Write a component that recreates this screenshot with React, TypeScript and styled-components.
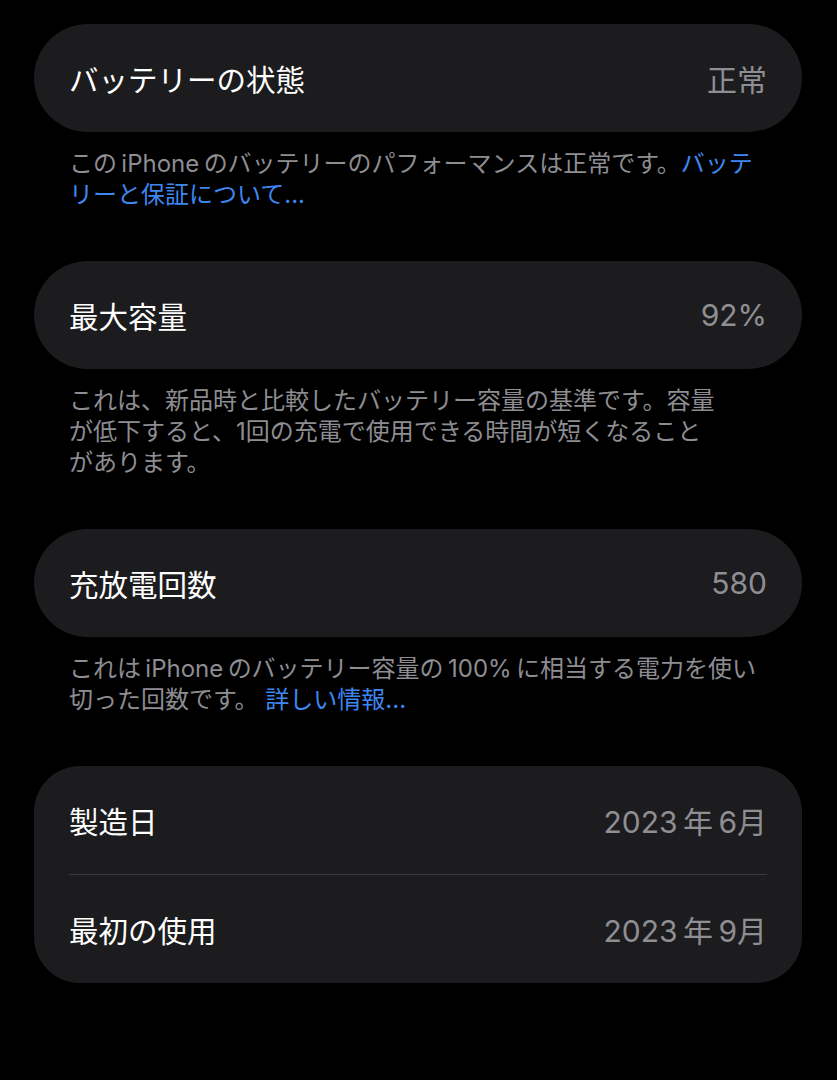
import React from 'react';
import styled, { createGlobalStyle } from 'styled-components';

const GlobalStyle = createGlobalStyle`
  html, body {
    margin: 0;
    padding: 0;
    background: #000;
  }
  body {
    font-family: "Inter", "Noto Sans CJK JP", sans-serif;
    -webkit-font-smoothing: antialiased;
  }
`;

const Page = styled.div`
  display: flex;
  flex-direction: column;
  padding: 24px 35px 40px 34px;
  min-height: 1080px;
  box-sizing: border-box;
  background: #000;
`;

const Section = styled.section`
  display: flex;
  flex-direction: column;
`;

const Card = styled.div<{ $radius: number }>`
  display: flex;
  flex-direction: column;
  background: #1c1c1e;
  border-radius: ${(p) => p.$radius}px;
  padding: 0 35px;
`;

const Row = styled.div`
  display: flex;
  align-items: center;
  justify-content: space-between;
  height: 108px;
`;

const Divider = styled.div`
  height: 1px;
  background: #3a3a3d;
`;

const Label = styled.span`
  font-family: "Noto Sans CJK JP", sans-serif;
  font-size: 29.5px;
  font-weight: 400;
  color: #fff;
`;

const Value = styled.span`
  font-family: "Inter", "Noto Sans CJK JP", sans-serif;
  font-size: 30px;
  font-weight: 400;
  color: #8e8e93;
`;

const Footer = styled.p`
  margin: 0;
  padding: 16px 35px 51px;
  font-family: "Inter", "Noto Sans CJK JP", sans-serif;
  font-size: 24px;
  line-height: 31px;
  color: #8d8d92;
`;

const Link = styled.a`
  color: #3e87f0;
  text-decoration: none;
`;

type Item = { label: string; value: string };

const Group: React.FC<{ items: Item[]; children?: React.ReactNode }> = ({ items, children }) => (
  <Section>
    <Card $radius={items.length > 1 ? 46 : 54}>
      {items.map((it, i) => (
        <React.Fragment key={it.label}>
          {i > 0 && <Divider />}
          <Row>
            <Label>{it.label}</Label>
            <Value>{it.value}</Value>
          </Row>
        </React.Fragment>
      ))}
    </Card>
    {children}
  </Section>
);

// thin space between latin words and kana, like the system text
const ts = '\u2009';

export default function App() {
  return (
    <>
      <GlobalStyle />
      <Page>
        <Group items={[{ label: 'バッテリーの状態', value: '正常' }]}>
          <Footer>
            この{ts}iPhone{ts}のバッテリーのパフォーマンスは正常です。<Link>バッテ<br />リーと保証について...</Link>
          </Footer>
        </Group>
        <Group items={[{ label: '最大容量', value: '92%' }]}>
          <Footer>
            これは、新品時と比較したバッテリー容量の基準です。容量<br />
            が低下すると、1回の充電で使用できる時間が短くなること<br />
            があります。
          </Footer>
        </Group>
        <Group items={[{ label: '充放電回数', value: '580' }]}>
          <Footer>
            これは{ts}iPhone{ts}のバッテリー容量の{ts}100%{ts}に相当する電力を使い<br />
            切った回数です。 <Link>詳しい情報...</Link>
          </Footer>
        </Group>
        <Group
          items={[
            { label: '製造日', value: `2023${ts}年${ts}6月` },
            { label: '最初の使用', value: `2023${ts}年${ts}9月` },
          ]}
        />
      </Page>
    </>
  );
}
